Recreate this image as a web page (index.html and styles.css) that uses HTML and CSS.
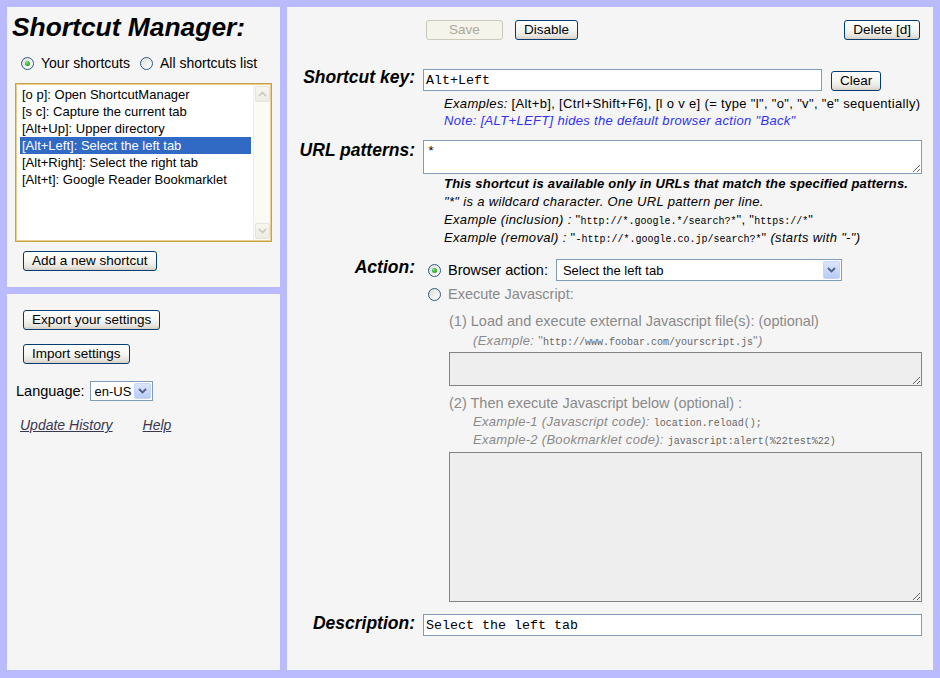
FILE: index.html
```html
<!DOCTYPE html>
<html lang="en">
<head>
<meta charset="utf-8">
<title>Shortcut Manager</title>
<link rel="stylesheet" href="styles.css">
</head>
<body>
<div class="page">
  <div class="left">
    <section class="panel p1">
      <h1 class="title">Shortcut Manager:</h1>
      <div class="radios">
        <label class="radio-item"><span class="radio checked"></span>Your shortcuts</label>
        <label class="radio-item"><span class="radio"></span>All shortcuts list</label>
      </div>
      <div class="listbox">
        <ul class="items">
          <li>[o p]: Open ShortcutManager</li>
          <li>[s c]: Capture the current tab</li>
          <li>[Alt+Up]: Upper directory</li>
          <li class="sel">[Alt+Left]: Select the left tab</li>
          <li>[Alt+Right]: Select the right tab</li>
          <li>[Alt+t]: Google Reader Bookmarklet</li>
        </ul>
        <div class="scrollbar">
          <span class="sb-btn"><svg width="9" height="6" viewBox="0 0 9 6"><path d="M1 5 L4.5 1.5 L8 5" fill="none" stroke="#c9c8bd" stroke-width="1.6"/></svg></span>
          <span class="sb-btn"><svg width="9" height="6" viewBox="0 0 9 6"><path d="M1 1 L4.5 4.5 L8 1" fill="none" stroke="#c9c8bd" stroke-width="1.6"/></svg></span>
        </div>
      </div>
      <button class="btn btn-add">Add a new shortcut</button>
    </section>
    <section class="panel p2">
      <button class="btn btn-block">Export your settings</button>
      <button class="btn btn-block btn-import">Import settings</button>
      <div class="lang-row">
        <span>Language:</span>
        <div class="select select-lang">
          <span>en-US</span>
          <span class="arrow"><svg width="9" height="6" viewBox="0 0 9 6"><path d="M1 1 L4.5 4.5 L8 1" fill="none" stroke="#4d6185" stroke-width="1.8"/></svg></span>
        </div>
      </div>
      <div class="links">
        <a class="link">Update History</a>
        <a class="link">Help</a>
      </div>
    </section>
  </div>

  <main class="panel right">
    <div class="toolbar">
      <button class="btn btn-save" disabled>Save</button>
      <button class="btn btn-disable">Disable</button>
      <button class="btn btn-delete">Delete [d]</button>
    </div>

    <div class="row row-key">
      <div class="label">Shortcut key:</div>
      <div class="field">
        <div class="key-line">
          <input class="input input-key" type="text" value="Alt+Left">
          <button class="btn btn-clear">Clear</button>
        </div>
        <div class="hint hint-key">
          <div class="hl"><i>Examples:</i> [Alt+b], [Ctrl+Shift+F6], [l o v e] (= type "l", "o", "v", "e" sequentially)</div>
          <div class="hl note">Note: [ALT+LEFT] hides the default browser action "Back"</div>
        </div>
      </div>
    </div>

    <div class="row row-url">
      <div class="label label-url">URL patterns:</div>
      <div class="field">
        <textarea class="textarea ta-url">*</textarea>
        <div class="hint hint-url">
          <div class="hl strong">This shortcut is available only in URLs that match the specified patterns.</div>
          <div class="hl"><i>"*" is a wildcard character. One URL pattern per line.</i></div>
          <div class="hl"><i>Example (inclusion) :</i> "<code>http://*.google.*/search?*</code>", "<code>https://*</code>"</div>
          <div class="hl"><i>Example (removal) :</i> "<code>-http://*.google.co.jp/search?*</code>" <i>(starts with "-")</i></div>
        </div>
      </div>
    </div>

    <div class="row row-action">
      <div class="label">Action:</div>
      <div class="field">
        <div class="opt-line">
          <span class="radio checked"></span>
          <span class="opt-text">Browser action:</span>
          <div class="select select-action">
            <span>Select the left tab</span>
            <span class="arrow"><svg width="9" height="6" viewBox="0 0 9 6"><path d="M1 1 L4.5 4.5 L8 1" fill="none" stroke="#4d6185" stroke-width="1.8"/></svg></span>
          </div>
        </div>
        <div class="opt-line opt-line2">
          <span class="radio"></span>
          <span class="opt-text">Execute Javascript:</span>
        </div>
        <div class="js">
          <div class="js-title">(1) Load and execute external Javascript file(s): (optional)</div>
          <div class="js-example"><i>(Example:</i> "<code>http://www.foobar.com/yourscript.js</code>"<i>)</i></div>
          <textarea class="textarea ta-dis ta-file" disabled></textarea>
          <div class="js-title js-title2">(2) Then execute Javascript below (optional) :</div>
          <div class="js-example js-ex-tight"><i>Example-1 (Javascript code):</i> <code>location.reload();</code></div>
          <div class="js-example js-ex-tight"><i>Example-2 (Bookmarklet code):</i> <code>javascript:alert(%22test%22)</code></div>
          <textarea class="textarea ta-dis ta-code" disabled></textarea>
        </div>
      </div>
    </div>

    <div class="row row-desc">
      <div class="label label-desc">Description:</div>
      <div class="field">
        <input class="input input-desc" type="text" value="Select the left tab">
      </div>
    </div>
  </main>
</div>
</body>
</html>
```

FILE: styles.css
```css
* { box-sizing: border-box; }

html, body { margin: 0; }

body {
  background: #babaff;
  font-family: "Liberation Sans", Arial, sans-serif;
  color: #000;
}

.page {
  display: flex;
  gap: 7px;
  height: 678px;
  padding: 7px 7px 8px 7px;
}

.panel { background: #f5f5f5; }

.left {
  width: 273px;
  display: flex;
  flex-direction: column;
  gap: 7px;
}

.p1 { height: 280px; padding: 0 8px; }
.p2 { flex: 1; padding: 16px 8px 0 8px; }

/* title */
.title {
  margin: 5px 0 0 -3px;
  font: italic bold 26.4px/30px "Liberation Sans", Arial, sans-serif;
}

/* radios */
.radios {
  display: flex;
  align-items: center;
  gap: 10px;
  height: 18px;
  margin: 12px 0 0 6px;
  font-size: 14px;
}
.radio-item { display: flex; align-items: center; gap: 7px; }

.radio {
  flex: none;
  width: 13px;
  height: 13px;
  border-radius: 50%;
  border: 1px solid #2b5c8c;
  background: linear-gradient(135deg, #dcdbd3 0%, #f2f2ee 55%, #ffffff 100%);
  display: flex;
  align-items: center;
  justify-content: center;
}
.radio.checked::after {
  content: "";
  width: 5px;
  height: 5px;
  border-radius: 50%;
  background: radial-gradient(circle at 40% 35%, #7de07d, #21a121 70%);
}

/* list box */
.listbox {
  margin-top: 11px;
  width: 257px;
  height: 159px;
  border: 1px solid #c9a04a;
  box-shadow: inset 0 0 0 1px #e8cf8e;
  background: #fff;
  display: flex;
  padding: 1px;
}
.items {
  flex: 1;
  list-style: none;
  margin: 0;
  padding: 1px 2px 0 3px;
  font-size: 13px;
}
.items li {
  height: 17px;
  line-height: 17px;
  padding-left: 2px;
  white-space: nowrap;
}
.items li.sel { background: #316ac5; color: #fff; }

.scrollbar {
  width: 17px;
  flex: none;
  background: #fbfbf6;
  border-left: 1px solid #efeee6;
  display: flex;
  flex-direction: column;
  justify-content: space-between;
  align-items: center;
  padding: 1px 0;
}
.sb-btn {
  width: 15px;
  height: 16px;
  border: 1px solid #e6e5dc;
  border-radius: 2px;
  background: linear-gradient(#f7f7f2, #ecebe4);
  display: flex;
  align-items: center;
  justify-content: center;
}

/* buttons */
.btn {
  appearance: none;
  height: 20px;
  padding: 0 8px;
  font: 13.5px/18px "Liberation Sans", Arial, sans-serif;
  color: #000;
  border: 1px solid #003c74;
  border-radius: 3px;
  background: linear-gradient(#ffffff 0%, #f4f4f0 55%, #e4e2da 85%, #d6d0c5 100%);
  white-space: nowrap;
}
.btn:disabled {
  border-color: #cac8bb;
  color: #aca899;
  background: #f5f4ea;
}

.btn-add { margin: 9px 0 0 8px; display: block; }
.btn-block { display: block; margin-left: 8px; }
.btn-import { margin-top: 14px; }

/* language */
.lang-row {
  display: flex;
  align-items: center;
  margin-top: 17px;
  padding-left: 1px;
  font-size: 14.5px;
}
.select {
  display: flex;
  align-items: center;
  background: #fff;
  border: 1px solid #7f9db9;
  font-size: 13px;
  padding-left: 6px;
}
.select .arrow {
  margin-left: auto;
  margin-right: 1px;
  width: 17px;
  height: calc(100% - 2px);
  border: 1px solid #c6d5fb;
  border-radius: 2px;
  background: linear-gradient(#dbe5fd, #b9cbf6);
  display: flex;
  align-items: center;
  justify-content: center;
}
.select-lang { margin-left: 5px; width: 63px; height: 20px; padding-left: 4px; }

.links {
  display: flex;
  gap: 30px;
  margin-top: 16px;
  padding-left: 5px;
}
.link {
  font-size: 14px;
  font-style: italic;
  color: #383850;
  text-decoration: underline;
}

/* right panel */
.right {
  width: 646px;
  padding: 13px 11px 0 0;
}
.toolbar {
  display: flex;
  align-items: center;
  gap: 12px;
  padding-left: 139px;
}
.btn-save { width: 77px; }
.btn-delete { margin-left: auto; margin-right: 2px; }

.row {
  display: flex;
  align-items: flex-start;
  gap: 8px;
}
.label {
  width: 128px;
  flex: none;
  text-align: right;
  font: italic bold 17.5px/16px "Liberation Sans", Arial, sans-serif;
}
.field { flex: 1; min-width: 0; }

.row-key { margin-top: 29px; }
.key-line { display: flex; align-items: center; gap: 9px; }

.input {
  height: 22px;
  border: 1px solid #7f9db9;
  background: #fff;
  padding: 0 2px;
  font: 13.33px "Liberation Mono", "Courier New", monospace;
  color: #000;
  outline: none;
}
.input-key { width: 399px; }
.input-desc { width: 100%; }
.btn-clear { margin-top: 2px; }

.hint {
  padding-left: 21px;
  font-size: 13px;
  letter-spacing: 0.33px;
  white-space: nowrap;
}
.hl { overflow: visible; }
.hint-key { margin-top: 4px; }
.hint-key .hl { height: 17px; line-height: 17px; }
.note { font-style: italic; color: #3131f2; }

code {
  font-family: "Liberation Mono", "Courier New", monospace;
  font-size: 10px;
  line-height: 1;
  letter-spacing: 0;
}

.row-url { margin-top: 11px; }
.label-url { padding-top: 2px; }

.textarea {
  display: block;
  width: 100%;
  border: 1px solid #7f9db9;
  background: #fff;
  padding: 3px 3px;
  font: 13.33px/16px "Liberation Mono", "Courier New", monospace;
  color: #000;
  outline: none;
  margin: 0;
}
.ta-url { height: 34px; }
.hint-url { margin-top: 1px; }
.hint-url .hl { height: 18px; line-height: 18px; }
.strong { font-weight: bold; font-style: italic; letter-spacing: 0.2px; }

.row-action { margin-top: 12px; }
.opt-line {
  display: flex;
  align-items: center;
  height: 22px;
  font-size: 14.5px;
}
.opt-line .radio { margin-left: 5px; }
.opt-text { margin-left: 7px; }
.select-action { margin-left: 8px; width: 286px; height: 22px; }
.opt-line2 { margin-top: 4px; height: 18px; color: #8a8a8a; }

.js { padding-left: 26px; color: #8a8a8a; }
.js-title { font-size: 14.5px; height: 20px; line-height: 20px; margin-top: 8px; }
.js-title2 { margin-top: 7px; }
.js-example {
  padding-left: 24px;
  font-size: 13px;
  letter-spacing: 0.3px;
  height: 20px;
  line-height: 20px;
  white-space: nowrap;
}
.js-example code { color: #666; }
.js-ex-tight { height: 18px; line-height: 18px; }

.ta-dis {
  background: #eeeeee;
  border-color: #838383;
}
.ta-file { margin-top: 1px; height: 34px; }
.ta-code { margin-top: 3px; height: 150px; }

.row-desc { margin-top: 12px; }
.label-desc { padding-top: 1px; }
```
